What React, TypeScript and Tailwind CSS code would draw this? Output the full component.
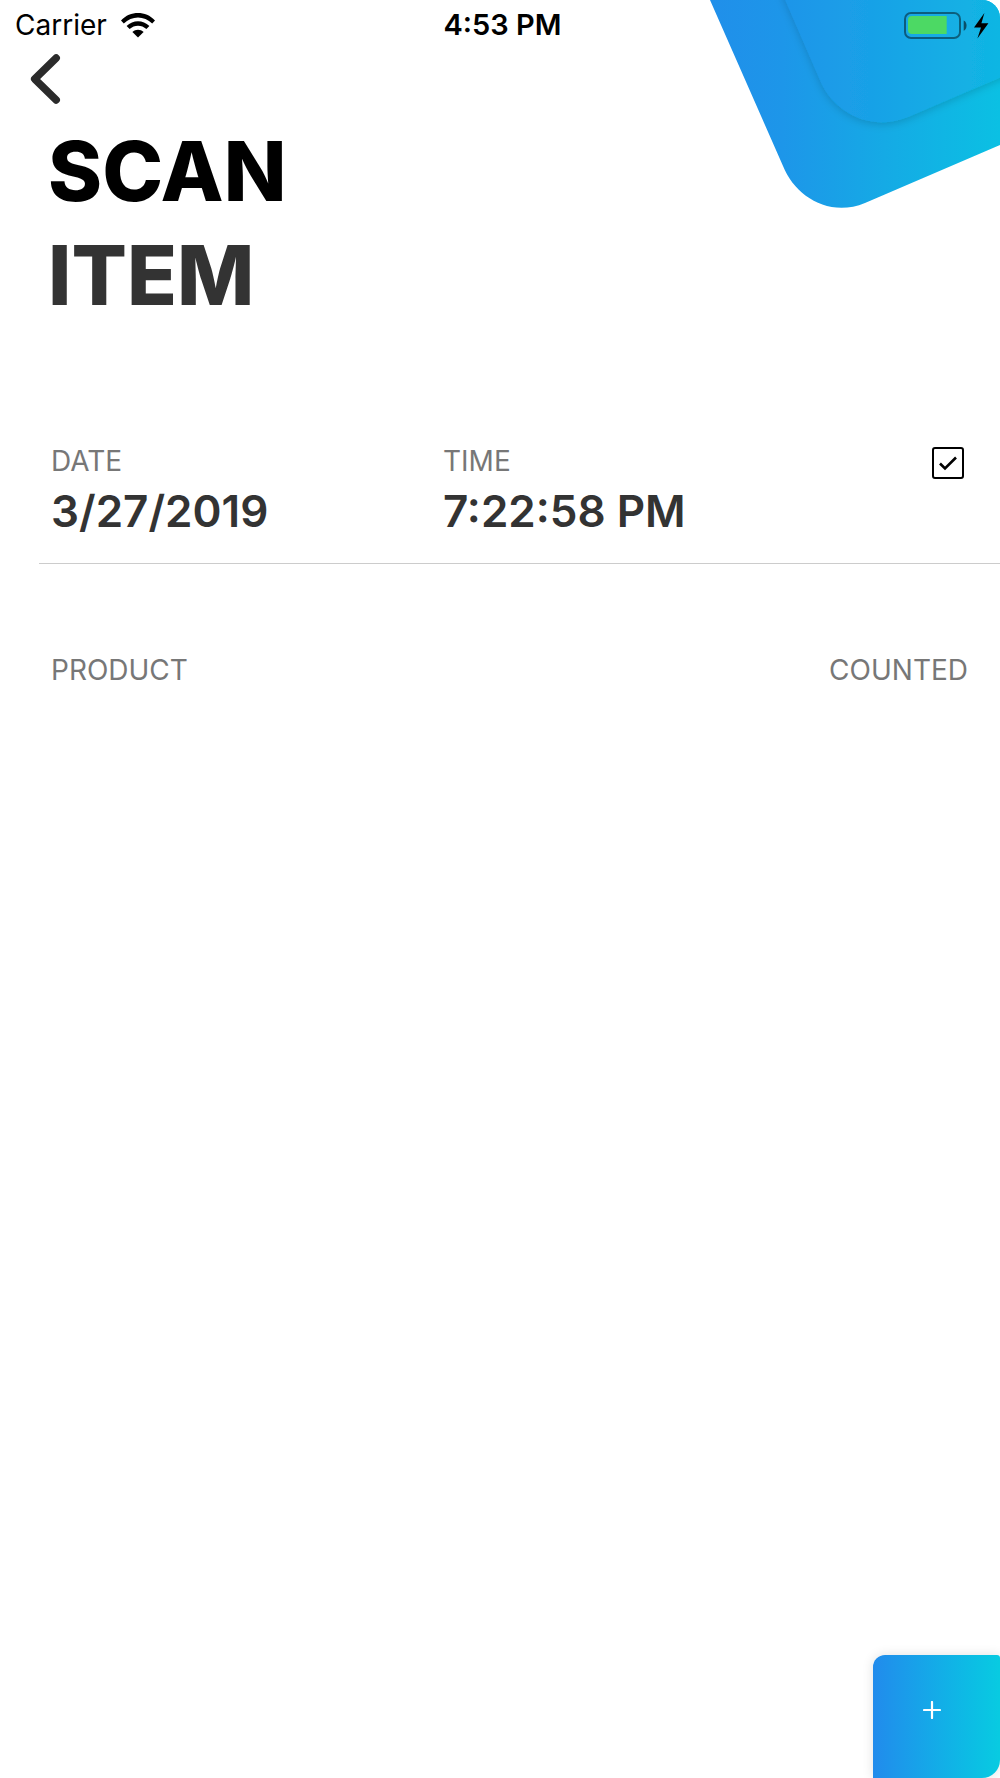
import { useState } from 'react';

function WifiIcon() {
  return (
    <svg width="34" height="25" viewBox="0 0 34 25" aria-hidden="true">
      <path d="M0 7.4C9.4-2.4 24.6-2.4 34 7.4L31.2 10.4C23.3 2.4 10.7 2.4 2.8 10.4Z" />
      <path d="M5.6 13C12 6.6 22 6.6 28.4 13L25.4 16.1C20.7 11.5 13.3 11.5 8.6 16.1Z" />
      <path d="M11.4 18.9C14.6 16 19.4 16 22.6 18.9L17 24.6Z" />
    </svg>
  );
}

function BatteryIcon() {
  return (
    <svg width="86" height="27" viewBox="0 0 86 27" aria-hidden="true">
      <rect x="1" y="1" width="55" height="25" rx="6" fill="none" stroke="#000" strokeOpacity="0.45" strokeWidth="2" />
      <path d="M42.7 4H8a4 4 0 0 0-4 4v10a4 4 0 0 0 4 4h34.7Z" fill="#4cd964" />
      <path d="M59.7 8.4c3.8 1.6 3.8 8.8 0 10.4Z" fillOpacity="0.55" />
      <path d="M80.4 1 70 15.4h7L73.4 26.4 84.4 11.2h-7Z" />
    </svg>
  );
}

function HeaderShape() {
  return (
    <svg
      className="pointer-events-none absolute top-0 right-0 h-[210px] w-[290px] rounded-tr-[18px]"
      viewBox="0 0 290 210"
      aria-hidden="true"
    >
      <defs>
        <linearGradient id="outer" gradientUnits="userSpaceOnUse" x1="0" y1="0" x2="290" y2="0">
          <stop offset="0" stopColor="#208fea" />
          <stop offset="0.25" stopColor="#1d96e9" />
          <stop offset="0.6" stopColor="#15aae5" />
          <stop offset="1" stopColor="#0bc0e3" />
        </linearGradient>
        <linearGradient id="inner" gradientUnits="userSpaceOnUse" x1="74" y1="0" x2="290" y2="0">
          <stop offset="0" stopColor="#1d95e9" />
          <stop offset="0.4" stopColor="#19a1e7" />
          <stop offset="1" stopColor="#10b6e3" />
        </linearGradient>
        <clipPath id="outerClip">
          <path d="M0 0 73 166C85 196 119 218 155 203L290 145V0Z" />
        </clipPath>
        <filter id="soft" x="-20%" y="-20%" width="140%" height="150%">
          <feDropShadow dx="0" dy="2" stdDeviation="4" floodColor="#000" floodOpacity="0.16" />
        </filter>
      </defs>
      <path d="M0 0 73 166C85 196 119 218 155 203L290 145V0Z" fill="url(#outer)" />
      <g clipPath="url(#outerClip)">
        <path
          d="M71-10 110 80C122 110 158 133 198 117L310 69V-10Z"
          fill="url(#inner)"
          filter="url(#soft)"
        />
      </g>
    </svg>
  );
}

export default function App() {
  const [confirmed, setConfirmed] = useState(true);

  const details = [
    { label: 'DATE', value: '3/27/2019' },
    { label: 'TIME', value: '7:22:58 PM' },
  ];

  return (
    <main className="relative flex min-h-screen w-full flex-col overflow-hidden bg-white font-['Inter',sans-serif]">
      <HeaderShape />

      <div className="relative grid h-[50px] grid-cols-3 items-center pr-[10px] pl-[15px] text-[28px] leading-8 text-black">
        <div className="flex items-center gap-[14px]">
          <span>Carrier</span>
          <WifiIcon />
        </div>
        <span className="text-center text-[29px] font-semibold">4:53 PM</span>
        <div className="flex justify-end">
          <BatteryIcon />
        </div>
      </div>

      <header className="relative">
        <button type="button" aria-label="Back" className="block px-7 py-1">
          <svg width="36" height="50" viewBox="0 0 36 50" fill="none" stroke="#2b2b2b" strokeWidth="7.5" strokeLinecap="round" strokeLinejoin="round" aria-hidden="true">
            <path d="M28.2 4 6.7 25 28.2 46" />
          </svg>
        </button>
        <h1 className="px-12 pt-3 text-[82px] leading-[104px] font-extrabold text-black">
          SCAN
          <span className="block text-[#333333]">ITEM</span>
        </h1>
      </header>

      <section className="mt-[115px] ml-[39px] flex border-b border-[#cccccc] pr-9 pb-[26px] pl-3">
        <dl className="grid flex-1 grid-cols-[392px_1fr]">
          {details.map((detail) => (
            <div key={detail.label}>
              <dt className="text-[28px] leading-9 text-[#777777]">{detail.label}</dt>
              <dd className="mt-[6px] text-[44px] leading-[52px] font-semibold text-[#333333]">{detail.value}</dd>
            </div>
          ))}
        </dl>
        <div className="relative mt-1 size-8">
          <input
            type="checkbox"
            aria-label="Confirm count"
            checked={confirmed}
            onChange={(e) => setConfirmed(e.target.checked)}
            className="peer block size-8 appearance-none rounded-[3px] border-2 border-black"
          />
          <svg className="pointer-events-none absolute inset-0 hidden peer-checked:block" width="32" height="32" viewBox="0 0 32 32" fill="none" stroke="#000" strokeWidth="2.6" aria-hidden="true">
            <path d="M8 16.5 13 21.5 24 10.5" />
          </svg>
        </div>
      </section>

      <div className="mt-[88px] flex justify-between pr-8 pl-[51px] text-[28px] leading-9 text-[#777777]">
        <span>PRODUCT</span>
        <span>COUNTED</span>
      </div>

      <button
        type="button"
        aria-label="Add item"
        className="mt-auto flex h-[123px] w-[127px] justify-center self-end rounded-tl-xl rounded-tr-[3px] rounded-br-[18px] bg-linear-to-r from-[#218bec] to-[#08cbe1] pt-[46px] pr-[9px] shadow-[0_0_12px_rgba(0,0,0,0.12)]"
      >
        <svg width="18" height="18" viewBox="0 0 18 18" stroke="#fff" strokeWidth="2.2" strokeLinecap="round" aria-hidden="true">
          <path d="M9 1V17M1 9H17" />
        </svg>
      </button>
    </main>
  );
}
